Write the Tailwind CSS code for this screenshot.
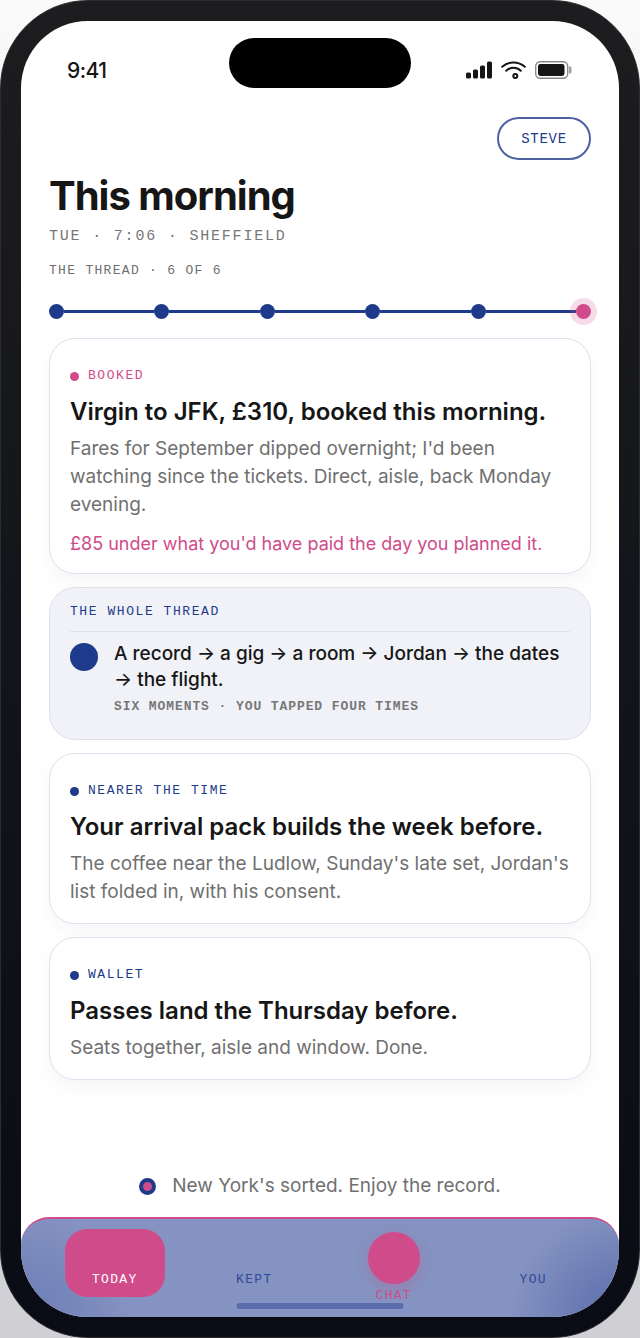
<!DOCTYPE html>
<html lang="en">
<head>
    <meta charset="UTF-8">
    <meta name="viewport" content="width=device-width, initial-scale=1.0">
    <title>This morning</title>
    <!-- Tailwind CSS CDN -->
    <script src="https://cdn.jsdelivr.net/npm/@tailwindcss/browser@4"></script>
</head>
<body class="min-h-screen flex bg-linear-to-b from-[#fafafa] to-[#cfcfd4] font-['Inter',sans-serif] text-[#161616]">
    <!-- Phone frame -->
    <div class="w-full flex rounded-[88px] border border-[#2c2c2f] bg-linear-to-b from-[#1d1d1f] to-[#090c14] p-5">
        <div class="relative w-full flex flex-col overflow-hidden rounded-[67px] bg-white">

            <!-- Status bar -->
            <header class="mt-[17px] grid h-[50px] grid-cols-[1fr_182px_1fr] items-center">
                <span class="mt-4 pl-[46px] text-[21px] leading-6 font-medium tracking-tight">9:41</span>
                <div class="h-full rounded-full bg-black"></div>
                <div class="mt-[14px] flex items-center justify-end gap-[9px] pr-[47px]">
                    <svg class="h-[18px] w-[26px]" viewBox="0 0 26 18" fill="#161616" aria-hidden="true">
                        <rect x="0" y="11.500" width="5" height="6" rx="1.6"/>
                        <rect x="7" y="8.500" width="5" height="9" rx="1.6"/>
                        <rect x="14" y="4.500" width="5" height="13" rx="1.6"/>
                        <rect x="21" y=".5" width="5" height="17" rx="1.6"/>
                    </svg>
                    <svg class="h-[18px] w-[25px]" viewBox="0 0 25 18" fill="none" stroke="#161616" stroke-width="2" stroke-linecap="round" aria-hidden="true">
                        <path d="M1.2 5.8C4.5 2.8 8 1.4 12.5 1.4s8 1.4 11.3 4.4"/>
                        <path d="M5.2 9.8c4.2-4 10.4-4 14.6 0"/>
                        <circle cx="14.3" cy="15" r="2"/>
                    </svg>
                    <svg class="h-[18px] w-[37px]" viewBox="0 0 37 18" aria-hidden="true">
                        <rect x=".7" y=".7" width="32" height="16.6" rx="4.5" fill="none" stroke="#8a8a8a" stroke-width="1.4"/>
                        <rect x="3" y="3" width="26.5" height="12" rx="2.4" fill="#161616"/>
                        <path d="M34 5.5h1.4a1.2 1.2 0 0 1 1.2 1.2v4.6a1.2 1.2 0 0 1-1.2 1.2H34z" fill="#a5a5a5"/>
                    </svg>
                </div>
            </header>

            <main class="flex grow flex-col px-7 pt-[29px]">
                <button type="button" class="h-[43px] w-[94px] self-end rounded-full border-2 border-[#1e3a8a]/80 font-['Liberation_Mono',monospace] text-sm tracking-wider text-[#1e3a8a]">STEVE</button>

                <h1 class="mt-3 text-[40px] leading-12 font-bold tracking-tight">This morning</h1>
                <p class="mt-[7px] font-['Liberation_Mono',monospace] text-[15px] leading-5 tracking-[0.12em] text-[#777]">TUE · 7:06 · SHEFFIELD</p>
                <p class="mt-4 font-['Liberation_Mono',monospace] text-[13px] leading-4 tracking-widest text-[#6f6f6f]">THE THREAD · 6 OF 6</p>

                <!-- Thread progress -->
                <div class="mt-[25px] flex items-center">
                    <span class="size-[15px] rounded-full bg-[#1e3a8a]"></span>
                    <span class="h-[3px] grow bg-[#1e3a8a]"></span>
                    <span class="size-[15px] rounded-full bg-[#1e3a8a]"></span>
                    <span class="h-[3px] grow bg-[#1e3a8a]"></span>
                    <span class="size-[15px] rounded-full bg-[#1e3a8a]"></span>
                    <span class="h-[3px] grow bg-[#1e3a8a]"></span>
                    <span class="size-[15px] rounded-full bg-[#1e3a8a]"></span>
                    <span class="h-[3px] grow bg-[#1e3a8a]"></span>
                    <span class="size-[15px] rounded-full bg-[#1e3a8a]"></span>
                    <span class="h-[3px] grow bg-[#1e3a8a]"></span>
                    <span class="z-10 size-[15px] rounded-full bg-[#d04b8a] ring-6 ring-[#d04b8a]/20"></span>
                </div>

                <!-- Cards -->
                <div class="mt-[19px] flex flex-col gap-[13px]">
                    <section class="rounded-[26px] border border-[#dfe0ee] bg-white px-5 pt-[29px] pb-[17px] shadow-[0_8px_20px_rgba(20,20,40,0.04)]">
                        <p class="flex items-center gap-[9px] font-['Liberation_Mono',monospace] text-[13px] leading-4 tracking-[0.12em] text-[#d04b8a]"><span class="size-[9px] rounded-full bg-[#d04b8a]"></span>BOOKED</p>
                        <h2 class="mt-3 text-[24px] leading-8 font-semibold">Virgin to JFK, £310, booked this morning.</h2>
                        <p class="mt-[7px] text-[19px] leading-7 text-[#707070]">Fares for September dipped overnight; I'd been watching since the tickets. Direct, aisle, back Monday evening.</p>
                        <p class="mt-3 text-[18px] leading-[25px] text-[#d04b8a]">£85 under what you'd have paid the day you planned it.</p>
                    </section>

                    <section class="rounded-[26px] border border-[#dfe0ee] bg-[#f1f2f7] px-5 pt-4 pb-6">
                        <h2 class="border-b border-[#e0e1ea] pb-[11px] font-['Liberation_Mono',monospace] text-[13px] leading-4 tracking-[0.12em] text-[#1e3a8a]">THE WHOLE THREAD</h2>
                        <div class="mt-[9px] flex gap-4">
                            <span class="mt-[2px] size-7 shrink-0 rounded-full bg-[#1e3a8a]"></span>
                            <div>
                                <p class="text-[19px] leading-[26px] font-medium">A record → a gig → a room → Jordan → the dates → the flight.</p>
                                <p class="mt-[6px] font-['Liberation_Mono',monospace] text-[13px] leading-4 font-bold tracking-[0.07em] text-[#777]">SIX MOMENTS · YOU TAPPED FOUR TIMES</p>
                            </div>
                        </div>
                    </section>

                    <section class="rounded-[26px] border border-[#dfe0ee] bg-white px-5 pt-[29px] pb-[17px] shadow-[0_8px_20px_rgba(20,20,40,0.04)]">
                        <p class="flex items-center gap-[9px] font-['Liberation_Mono',monospace] text-[13px] leading-4 tracking-[0.12em] text-[#1e3a8a]"><span class="size-[9px] rounded-full bg-[#1e3a8a]"></span>NEARER THE TIME</p>
                        <h2 class="mt-3 text-[24px] leading-8 font-semibold">Your arrival pack builds the week before.</h2>
                        <p class="mt-[7px] text-[19px] leading-7 text-[#707070]">The coffee near the Ludlow, Sunday's late set, Jordan's list folded in, with his consent.</p>
                    </section>

                    <section class="rounded-[26px] border border-[#dfe0ee] bg-white px-5 pt-[29px] pb-[17px] shadow-[0_8px_20px_rgba(20,20,40,0.04)]">
                        <p class="flex items-center gap-[9px] font-['Liberation_Mono',monospace] text-[13px] leading-4 tracking-[0.12em] text-[#1e3a8a]"><span class="size-[9px] rounded-full bg-[#1e3a8a]"></span>WALLET</p>
                        <h2 class="mt-3 text-[24px] leading-8 font-semibold">Passes land the Thursday before.</h2>
                        <p class="mt-[7px] text-[19px] leading-7 text-[#707070]">Seats together, aisle and window. Done.</p>
                    </section>
                </div>

                <p class="mt-auto mb-[17px] flex items-center justify-center gap-4 text-[19px] leading-7 text-[#707070]">
                    <span class="size-[17px] rounded-full border-4 border-[#1e3a8a] bg-[#d04b8a]"></span>
                    New York's sorted. Enjoy the record.
                </p>
            </main>

            <!-- Tab bar -->
            <nav class="grid h-[100px] grid-cols-4 rounded-t-[28px] border-t-2 border-[#d04b8a] bg-[#8493c1] bg-[radial-gradient(circle_at_0%_100%,#6c7bb4_0%,transparent_18%),radial-gradient(circle_at_100%_100%,#5a6cab_0%,transparent_18%)] pt-[10px] pr-4 pl-6 font-['Liberation_Mono',monospace] text-[13px] leading-4 tracking-widest text-[#32489a]">
                <a href="#today" class="mx-auto flex h-[68px] w-[100px] items-end justify-center rounded-[22px] bg-[#d04b8a] pb-[9px] text-white">TODAY</a>
                <a href="#kept" class="flex h-[68px] items-end justify-center pb-[9px]">KEPT</a>
                <a href="#chat" class="flex flex-col items-center gap-1 pt-[3px] text-[#d04b8a]"><span class="size-[52px] rounded-full bg-[#d04b8a] shadow-[0_4px_12px_rgba(208,75,138,0.35)]"></span>CHAT</a>
                <a href="#you" class="flex h-[68px] items-end justify-center pb-[9px]">YOU</a>
            </nav>

            <!-- Home indicator -->
            <div class="absolute bottom-2 left-1/2 h-[6px] w-[167px] -translate-x-1/2 rounded-full bg-[#5a6cab]"></div>
        </div>
    </div>
</body>
</html>
